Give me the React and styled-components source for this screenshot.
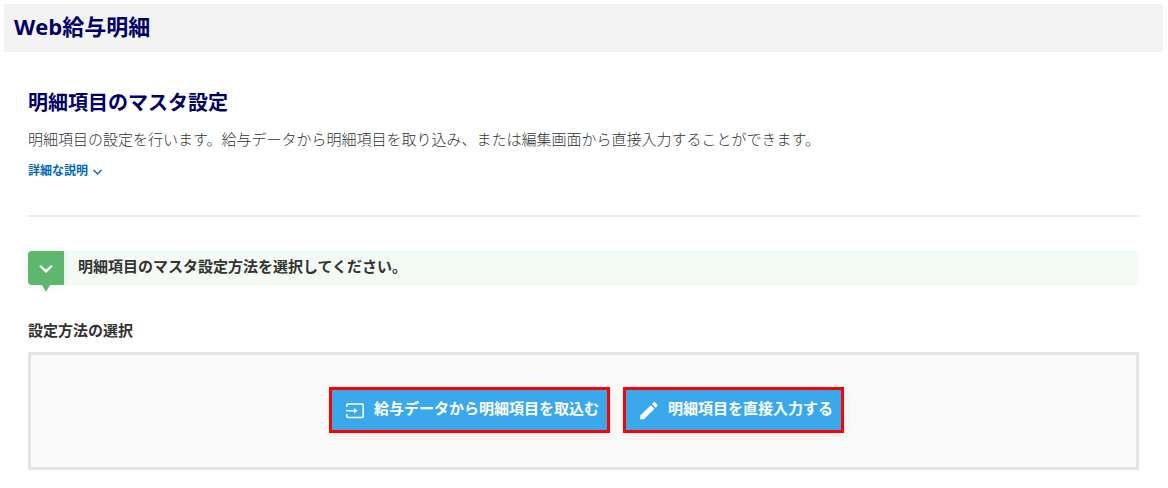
import React from "react";
import styled, { createGlobalStyle } from "styled-components";

const GlobalStyle = createGlobalStyle`
  *, *::before, *::after { box-sizing: border-box; }
  body {
    margin: 0;
    background: #fff;
    color: #333;
    font-family: "Open Sans", "Noto Sans CJK JP", sans-serif;
    font-size: 15px;
    line-height: 24px;
  }
  h1, h2, h3, p { margin: 0; }
`;

const Page = styled.div`
  padding: 4px 5px 16px 4px;
`;

const Header = styled.header`
  padding: 6px 10px 10px;
  background: #f3f3f3;
`;

const PageTitle = styled.h1`
  color: #000066;
  font-size: 22px;
  line-height: 32px;
`;

const Main = styled.main`
  padding: 37px 24px 0;
`;

const SectionTitle = styled.h2`
  color: #000066;
  font-size: 20px;
  line-height: 28px;
`;

const Lead = styled.p`
  margin-top: 10px;
  color: #333;
  font-weight: 300;
`;

const DetailLink = styled.a`
  display: inline-flex;
  align-items: center;
  gap: 4px;
  margin-top: 10px;
  color: #0068b7;
  font-size: 12px;
  font-weight: 700;
  line-height: 20px;
  text-decoration: none;
`;

const Divider = styled.hr`
  height: 2px;
  margin: 34px 0;
  border: 0;
  background: #ebebeb;
`;

const Notice = styled.div`
  display: flex;
  align-items: stretch;
  min-height: 34px;
  border-radius: 4px;
  background: #f4fbf5;
`;

const NoticeMark = styled.div`
  position: relative;
  display: flex;
  align-items: center;
  justify-content: center;
  width: 36px;
  border-radius: 4px 0 0 4px;
  background: #5fb66e;
  box-shadow: 0 0 6px rgba(0, 0, 0, 0.1);
  color: #fff;

  &::after {
    content: "";
    position: absolute;
    top: 100%;
    left: 50%;
    margin-left: -4px;
    border: 4px solid transparent;
    border-top: 7px solid #5fb66e;
    border-bottom: 0;
  }
`;

const NoticeText = styled.p`
  padding: 3px 14px 7px;
  font-weight: 700;
`;

const GroupTitle = styled.h3`
  margin-top: 33px;
  font-size: 15px;
  line-height: 24px;
`;

const ChoicePanel = styled.section`
  display: flex;
  flex-wrap: wrap;
  justify-content: center;
  gap: 13px;
  margin-top: 10px;
  padding: 32px 24px 34px 30px;
  border: 3px solid #e4e4e4;
  background: #fafafa;
`;

const ActionButton = styled.button`
  display: flex;
  align-items: center;
  gap: 8px;
  height: 46px;
  padding: 0 8px 0 12px;
  border: 3px solid #ff0000;
  background: #3aa9eb;
  box-shadow: 2px 3px 8px rgba(0, 0, 0, 0.06);
  color: #fff;
  font-family: inherit;
  font-size: 15px;
  font-weight: 700;
  line-height: 24px;
  cursor: pointer;
`;

const ButtonLabel = styled.span`
  padding-bottom: 4px;
`;

const Chevron = ({ width, stroke }) => (
  <svg width={width} height={width} viewBox="0 0 14 14" fill="none" aria-hidden="true">
    <path d="M1.8 5l5.2 5L12.2 5" stroke="currentColor" strokeWidth={stroke} />
  </svg>
);

const ImportIcon = () => (
  <svg width="22" height="22" viewBox="0 0 22 22" fill="none" stroke="currentColor" strokeWidth="1.5" aria-hidden="true">
    <path d="M2.8 8V6a1 1 0 0 1 1-1h14.4a1 1 0 0 1 1 1v11.4a1 1 0 0 1-1 1H3.8a1 1 0 0 1-1-1v-2.4" />
    <path d="M2 11.7h10" />
    <path d="M10 8.9l3.4 2.8-3.4 2.8z" fill="currentColor" stroke="none" />
  </svg>
);

const PencilIcon = () => (
  <svg width="22" height="22" viewBox="0 0 24 24" fill="currentColor" aria-hidden="true">
    <path d="M2.5 18V22h4L18 10.7l-4-4L2.5 18zM21.2 7.6a1 1 0 0 0 0-1.4l-2.6-2.6a1 1 0 0 0-1.4 0l-1.9 1.9 4 4 1.9-1.9z" />
  </svg>
);

export default function App() {
  return (
    <>
      <GlobalStyle />
      <Page>
        <Header>
          <PageTitle>Web給与明細</PageTitle>
        </Header>
        <Main>
          <SectionTitle>明細項目のマスタ設定</SectionTitle>
          <Lead>
            明細項目の設定を行います。給与データから明細項目を取り込み、または編集画面から直接入力することができます。
          </Lead>
          <DetailLink href="#details">
            詳細な説明
            <Chevron width={11} stroke={1.8} />
          </DetailLink>
          <Divider />
          <Notice>
            <NoticeMark>
              <Chevron width={16} stroke={2} />
            </NoticeMark>
            <NoticeText>明細項目のマスタ設定方法を選択してください。</NoticeText>
          </Notice>
          <GroupTitle id="method">設定方法の選択</GroupTitle>
          <ChoicePanel aria-labelledby="method">
            <ActionButton type="button">
              <ImportIcon />
              <ButtonLabel>給与データから明細項目を取込む</ButtonLabel>
            </ActionButton>
            <ActionButton type="button">
              <PencilIcon />
              <ButtonLabel>明細項目を直接入力する</ButtonLabel>
            </ActionButton>
          </ChoicePanel>
        </Main>
      </Page>
    </>
  );
}
